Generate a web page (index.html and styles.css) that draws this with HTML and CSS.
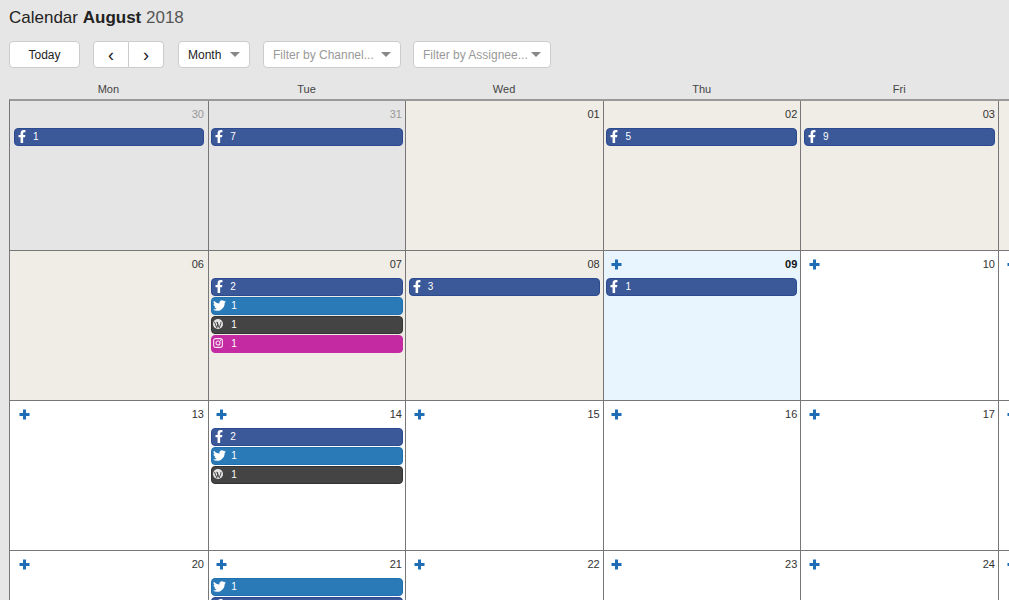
FILE: index.html
```html
<!DOCTYPE html>
<html lang="en">
<head>
<meta charset="utf-8">
<title>Calendar</title>
<link rel="stylesheet" href="styles.css">
</head>
<body>
<svg class="defs" width="0" height="0" aria-hidden="true">
  <symbol id="i-fb" viewBox="0 0 320 512"><path fill="#fff" d="M279.14 288l14.22-92.66h-88.91v-60.13c0-25.35 12.42-50.06 52.24-50.06h40.42V6.26S260.43 0 225.36 0c-73.22 0-121.08 44.38-121.08 124.72v70.62H22.89V288h81.39v224h100.17V288z"/></symbol>
  <symbol id="i-tw" viewBox="0 0 512 512"><path fill="#fff" d="M459.37 151.716c.325 4.548.325 9.097.325 13.645 0 138.72-105.583 298.558-298.558 298.558-59.452 0-114.68-17.219-161.137-47.106 8.447.974 16.568 1.299 25.34 1.299 49.055 0 94.213-16.568 130.274-44.832-46.132-.975-84.792-31.188-98.112-72.772 6.498.974 12.995 1.624 19.818 1.624 9.421 0 18.843-1.3 27.614-3.573-48.081-9.747-84.143-51.98-84.143-102.985v-1.299c13.969 7.797 30.214 12.67 47.431 13.319-28.264-18.843-46.781-51.005-46.781-87.391 0-19.492 5.197-37.36 14.294-52.954 51.655 63.675 129.3 105.258 216.365 109.807-1.624-7.797-2.599-15.918-2.599-24.04 0-57.828 46.782-104.934 104.934-104.934 30.213 0 57.502 12.67 76.67 33.137 23.715-4.548 46.456-13.32 66.599-25.34-7.798 24.366-24.366 44.833-46.132 57.827 21.117-2.273 41.584-8.122 60.426-16.243-14.292 20.791-32.161 39.308-52.628 54.253z"/></symbol>
  <symbol id="i-wp" viewBox="0 0 24 24"><circle cx="12" cy="12" r="12" fill="#e4e4e4"/><path fill="none" stroke="#444" stroke-width="2.300" d="M3.500 7l5.500 14 2.900-8.500L9.800 7M9 7l6 14 3.800-10c.6-1.700.1-3-.8-4"/></symbol>
  <symbol id="i-ig" viewBox="0 0 24 24"><rect x="1.500" y="1.500" width="21" height="21" rx="5" fill="none" stroke="#fbe3f4" stroke-width="2.600"/><circle cx="12" cy="12" r="4.800" fill="none" stroke="#fbe3f4" stroke-width="2.600"/><circle cx="18" cy="6" r="1.600" fill="#fbe3f4"/></symbol>
  <symbol id="i-plus" viewBox="0 0 11 11"><path fill="none" stroke="#1f6db5" stroke-width="3" d="M5.500 .5v10M.5 5.500h10"/></symbol>
</svg>

<h1 class="title">Calendar <b>August</b> <span>2018</span></h1>

<div class="toolbar">
  <button class="btn today">Today</button>
  <div class="btn-group">
    <button class="btn chev">‹</button>
    <button class="btn chev">›</button>
  </div>
  <div class="btn select month"><span>Month</span><i class="caret"></i></div>
  <div class="btn select filter"><span>Filter by Channel...</span><i class="caret"></i></div>
  <div class="btn select filter"><span>Filter by Assignee...</span><i class="caret"></i></div>
</div>

<div class="weekdays">
  <div>Mon</div><div>Tue</div><div>Wed</div><div>Thu</div><div>Fri</div><div>Sat</div><div>Sun</div>
</div>

<div class="month-grid">
  <!-- row 1 -->
  <div class="cell other"><div class="head"><span class="num">30</span></div>
    <div class="ev fb"><svg class="ic f"><use href="#i-fb"/></svg><span>1</span></div></div>
  <div class="cell other"><div class="head"><span class="num">31</span></div>
    <div class="ev fb"><svg class="ic f"><use href="#i-fb"/></svg><span>7</span></div></div>
  <div class="cell past"><div class="head"><span class="num">01</span></div></div>
  <div class="cell past"><div class="head"><span class="num">02</span></div>
    <div class="ev fb"><svg class="ic f"><use href="#i-fb"/></svg><span>5</span></div></div>
  <div class="cell past"><div class="head"><span class="num">03</span></div>
    <div class="ev fb"><svg class="ic f"><use href="#i-fb"/></svg><span>9</span></div></div>
  <div class="cell past"><div class="head"><span class="num">04</span></div></div>
  <div class="cell past"><div class="head"><span class="num">05</span></div></div>
  <!-- row 2 -->
  <div class="cell past"><div class="head"><span class="num">06</span></div></div>
  <div class="cell past"><div class="head"><span class="num">07</span></div>
    <div class="ev fb"><svg class="ic f"><use href="#i-fb"/></svg><span>2</span></div>
    <div class="ev tw"><svg class="ic b"><use href="#i-tw"/></svg><span>1</span></div>
    <div class="ev wp"><svg class="ic s"><use href="#i-wp"/></svg><span>1</span></div>
    <div class="ev ig"><svg class="ic s"><use href="#i-ig"/></svg><span>1</span></div></div>
  <div class="cell past"><div class="head"><span class="num">08</span></div>
    <div class="ev fb"><svg class="ic f"><use href="#i-fb"/></svg><span>3</span></div></div>
  <div class="cell now"><div class="head"><svg class="plus"><use href="#i-plus"/></svg><span class="num">09</span></div>
    <div class="ev fb"><svg class="ic f"><use href="#i-fb"/></svg><span>1</span></div></div>
  <div class="cell"><div class="head"><svg class="plus"><use href="#i-plus"/></svg><span class="num">10</span></div></div>
  <div class="cell"><div class="head"><svg class="plus"><use href="#i-plus"/></svg><span class="num">11</span></div></div>
  <div class="cell"><div class="head"><svg class="plus"><use href="#i-plus"/></svg><span class="num">12</span></div></div>
  <!-- row 3 -->
  <div class="cell"><div class="head"><svg class="plus"><use href="#i-plus"/></svg><span class="num">13</span></div></div>
  <div class="cell"><div class="head"><svg class="plus"><use href="#i-plus"/></svg><span class="num">14</span></div>
    <div class="ev fb"><svg class="ic f"><use href="#i-fb"/></svg><span>2</span></div>
    <div class="ev tw"><svg class="ic b"><use href="#i-tw"/></svg><span>1</span></div>
    <div class="ev wp"><svg class="ic s"><use href="#i-wp"/></svg><span>1</span></div></div>
  <div class="cell"><div class="head"><svg class="plus"><use href="#i-plus"/></svg><span class="num">15</span></div></div>
  <div class="cell"><div class="head"><svg class="plus"><use href="#i-plus"/></svg><span class="num">16</span></div></div>
  <div class="cell"><div class="head"><svg class="plus"><use href="#i-plus"/></svg><span class="num">17</span></div></div>
  <div class="cell"><div class="head"><svg class="plus"><use href="#i-plus"/></svg><span class="num">18</span></div></div>
  <div class="cell"><div class="head"><svg class="plus"><use href="#i-plus"/></svg><span class="num">19</span></div></div>
  <!-- row 4 -->
  <div class="cell"><div class="head"><svg class="plus"><use href="#i-plus"/></svg><span class="num">20</span></div></div>
  <div class="cell"><div class="head"><svg class="plus"><use href="#i-plus"/></svg><span class="num">21</span></div>
    <div class="ev tw"><svg class="ic b"><use href="#i-tw"/></svg><span>1</span></div>
    <div class="ev fb"><svg class="ic f"><use href="#i-fb"/></svg><span>1</span></div></div>
  <div class="cell"><div class="head"><svg class="plus"><use href="#i-plus"/></svg><span class="num">22</span></div></div>
  <div class="cell"><div class="head"><svg class="plus"><use href="#i-plus"/></svg><span class="num">23</span></div></div>
  <div class="cell"><div class="head"><svg class="plus"><use href="#i-plus"/></svg><span class="num">24</span></div></div>
  <div class="cell"><div class="head"><svg class="plus"><use href="#i-plus"/></svg><span class="num">25</span></div></div>
  <div class="cell"><div class="head"><svg class="plus"><use href="#i-plus"/></svg><span class="num">26</span></div></div>
</div>
</body>
</html>
```

FILE: styles.css
```css
* { box-sizing: border-box; }
html, body { margin: 0; height: 600px; overflow: hidden; }
body {
  background: #e6e6e6;
  color: #222;
  font-family: "Liberation Sans", Arial, sans-serif;
  font-size: 14px;
  width: 1009px;
  padding: 0 0 0 9px;
}
.defs { position: absolute; }

.title {
  margin: 0;
  padding-top: 8px;
  height: 41px;
  font-size: 17px;
  line-height: 20px;
  font-weight: 400;
  color: #222;
}
.title b { font-weight: 700; }
.title span { color: #555; }

.toolbar { display: flex; height: 27px; }
.btn {
  display: flex;
  align-items: center;
  justify-content: center;
  height: 27px;
  padding: 0;
  background: #fff;
  border: 1px solid #ccc;
  border-radius: 4px;
  font: 12px "Liberation Sans", Arial, sans-serif;
  color: #222;
  white-space: nowrap;
}
.today { width: 71px; margin-right: 13px; }
.btn-group { display: flex; margin-right: 14px; }
.chev { width: 36px; font-size: 18px; line-height: 27px; padding-top: 2px; }
.chev:first-child { border-radius: 4px 0 0 4px; }
.chev:last-child { border-radius: 0 4px 4px 0; border-left: 0; width: 35px; }
.select { justify-content: space-between; padding: 0 9px 0 9px; }
.month { width: 72px; margin-right: 13px; }
.filter { width: 138px; margin-right: 12px; color: #999; }
.caret {
  width: 0; height: 0;
  border-left: 5px solid transparent;
  border-right: 5px solid transparent;
  border-top: 5px solid #888;
}

.weekdays {
  display: grid;
  grid-template-columns: 198.7px repeat(6, 197.6px);
  width: 1385px;
  height: 31px;
  padding-top: 15px;
  font-size: 11px;
  line-height: 13px;
  color: #444;
  text-align: center;
}

.month-grid {
  display: grid;
  grid-template-columns: 198.7px repeat(6, 197.6px);
  grid-auto-rows: 150px;
  width: 1385px;
  border-top: 2px solid #999;
  border-left: 1px solid #777;
}
.cell {
  background: #fff;
  border-right: 1px solid #777;
  border-bottom: 1px solid #777;
  padding: 0 3.2px 0 2.5px;
}
.cell:nth-child(7n+1) { padding: 0 3.7px 0 4px; }
.cell:nth-child(7n+2) { padding: 0 2.3px 0 2.5px; }
.other { background: #e5e5e5; }
.past { background: #f0ede6; }
.now { background: #e9f5fe; }

.head {
  display: flex;
  justify-content: space-between;
  align-items: center;
  height: 27px;
  padding: 0 0 0 5px;
  font-size: 11px;
  line-height: 13px;
  color: #333;
}
.cell:nth-child(7n+2) .head { padding-right: 1px; }
.num { margin-left: auto; }
.other .num { color: #999; }
.now .num { font-weight: 700; color: #111; }
.plus { width: 11px; height: 11px; }

.ev {
  display: flex;
  align-items: center;
  height: 18px;
  margin-bottom: 1px;
  border: 1px solid;
  border-radius: 4px;
  color: #fff;
  font-size: 10px;
  line-height: 14px;
}
.fb { background: #3b5898; border-color: #2b4a90; }
.tw { background: #2a7ab7; border-color: #1f70b2; }
.wp { background: #444; border-color: #333; }
.ig { background: #c42aa2; border-color: #c42aa2; }

.ic { flex: none; display: block; }
.ic.f { width: 14px; height: 13px; margin: -2px 4px 0 0; }
.ic.b { width: 13px; height: 13px; margin: -1px 5px 0 1px; }
.ic.s { width: 10px; height: 10px; margin: -3px 8px 0 1px; }
```
